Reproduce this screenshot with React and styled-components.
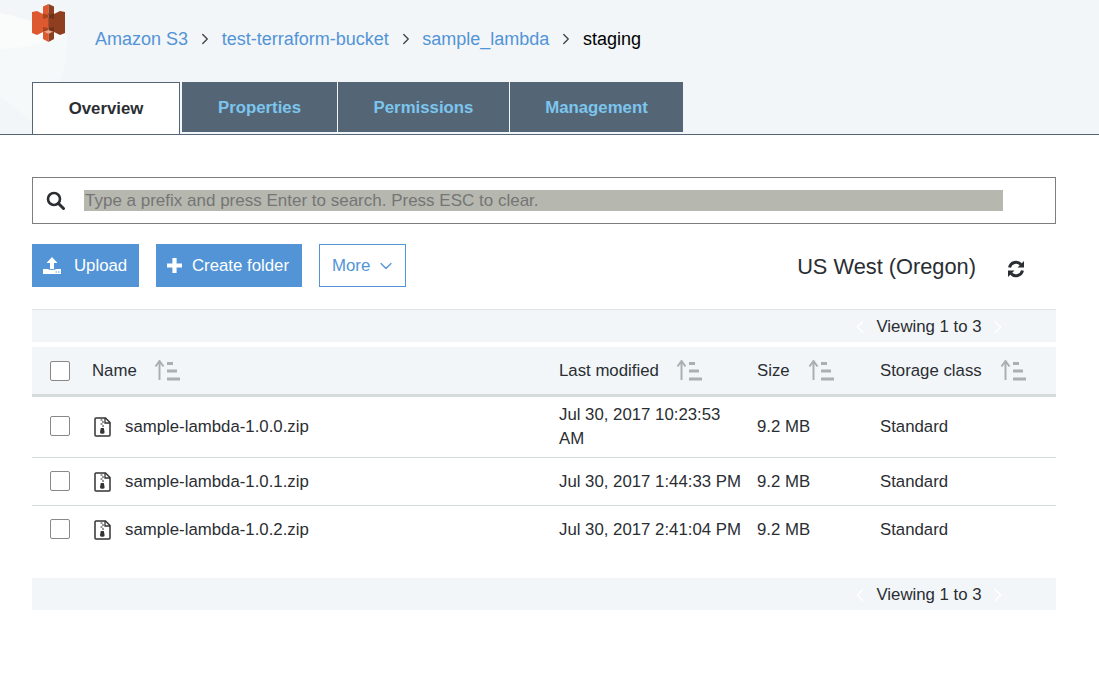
import React from "react";
import styled, { createGlobalStyle } from "styled-components";
import { ChevronRight, ChevronLeft, ChevronDown } from "lucide-react";

const GlobalStyle = createGlobalStyle`
  html, body {
    margin: 0;
    padding: 0;
    background: #fff;
    font-family: "Liberation Sans", Arial, sans-serif;
    color: #2a2e33;
  }
  * { box-sizing: border-box; }
`;

const Page = styled.div`
  width: 1099px;
  height: 673px;
  overflow: hidden;
`;

const Header = styled.header`
  position: relative;
  height: 135px;
  padding: 0 32px;
  background: #f2f6f8;
  border-bottom: 1px solid #546675;
  overflow: hidden;
`;

const Swoosh = styled.svg`
  position: absolute;
  left: 0;
  top: 0;
`;

const Crumbs = styled.div`
  position: relative;
  display: flex;
  align-items: flex-start;
  height: 82px;
`;

const LogoMark = styled.svg`
  flex-shrink: 0;
  margin-top: 4px;
  margin-right: 30px;
`;

const CrumbList = styled.nav`
  display: flex;
  align-items: center;
  margin-top: 27px;
  height: 24px;
  font-size: 18px;
`;

const Crumb = styled.span`
  color: ${(p) => (p.$current ? "#000" : "#5294d6")};
`;

const CrumbSep = styled.span`
  display: flex;
  justify-content: center;
  width: 33.6px;
  color: #444;
`;

const Tabs = styled.div`
  position: relative;
  display: flex;
  align-items: flex-start;
`;

const ActiveTab = styled.div`
  display: flex;
  align-items: center;
  justify-content: center;
  width: 148px;
  height: 52px;
  margin-right: 2px;
  background: #fff;
  border: 1px solid #546675;
  border-bottom: none;
  font-size: 16.8px;
  font-weight: 700;
  color: #2a2e33;
`;

const Tab = styled.div`
  display: flex;
  align-items: center;
  justify-content: center;
  width: ${(p) => p.$w}px;
  height: 50px;
  margin-right: 1px;
  padding-top: 2px;
  background: #546675;
  font-size: 16.8px;
  font-weight: 700;
  color: #7cc5ee;
`;

const Content = styled.main`
  padding: 42px 43px 0 32px;
`;

const SearchBox = styled.div`
  display: flex;
  align-items: center;
  height: 47px;
  padding: 0 52px 0 13px;
  border: 1px solid #7d7d7d;
`;

const SearchText = styled.span`
  flex: 1;
  height: 21px;
  margin-left: 19px;
  padding-left: 1px;
  background: #b6b8b0;
  font-size: 17px;
  line-height: 21px;
  color: #757575;
`;

const Toolbar = styled.div`
  display: flex;
  align-items: center;
  height: 43px;
  margin-top: 20px;
`;

const SolidButton = styled.div`
  display: flex;
  align-items: center;
  width: ${(p) => p.$w}px;
  height: 43px;
  margin-right: 17px;
  padding-left: ${(p) => p.$pad}px;
  gap: ${(p) => p.$gap}px;
  background: #5294d6;
  color: #fff;
  font-size: 16.8px;
`;

const OutlineButton = styled.div`
  display: flex;
  align-items: center;
  width: 87px;
  height: 43px;
  padding-left: 12px;
  gap: 6px;
  border: 1px solid #5294d6;
  color: #5294d6;
  font-size: 16.8px;
`;

const Region = styled.div`
  margin-left: auto;
  margin-top: 2px;
  margin-right: 31px;
  font-size: 21.8px;
  color: #2a2e33;
`;

const RefreshWrap = styled.div`
  display: flex;
  margin-top: 7px;
  margin-right: 31px;
`;

const Pager = styled.div`
  display: flex;
  align-items: center;
  justify-content: center;
  height: ${(p) => p.$h}px;
  margin-top: ${(p) => p.$top}px;
  padding-left: 770px;
  padding-top: 2px;
  background: #f2f6f8;
  border-top: ${(p) => (p.$line ? "1px solid #e1e4e5" : "none")};
  font-size: 16.8px;
  gap: 5px;
  color: #2a2e33;
  white-space: nowrap;
`;

const TableGrid = styled.div`
  display: grid;
  grid-template-columns: 60px 467px 198px 123px 176px;
  align-items: center;
  font-size: 16.8px;
`;

const HeadRow = styled(TableGrid)`
  height: 50px;
  margin-top: 5px;
  background: #f2f6f8;
  border-bottom: 3px solid #d5dbdb;
`;

const Row = styled(TableGrid)`
  height: ${(p) => p.$h}px;
  padding-bottom: ${(p) => p.$pb}px;
  border-bottom: ${(p) => (p.$last ? "none" : "1px solid #d5dbdb")};
`;

const CheckCell = styled.div`
  display: flex;
  padding-left: 18px;
`;

const Checkbox = styled.span`
  display: block;
  width: 20px;
  height: 20px;
  background: #fff;
  border: 1px solid #888;
  border-radius: 2px;
`;

const HeadCell = styled.div`
  display: flex;
  align-items: center;
  gap: ${(p) => p.$gap}px;
`;

const NameCell = styled.div`
  display: flex;
  align-items: center;
  gap: 13px;
  padding-top: 2px;
  padding-left: 2px;
`;

const Cell = styled.div`
  line-height: 24px;
  padding-top: 2px;
  padding-right: 10px;
`;

const SortIcon = () => (
  <svg width="26" height="22" viewBox="0 0 26 22">
    <path d="M5.500 20V2M1.500 6.500 5.500 1l4 5.500" fill="none" stroke="#aab0b2" strokeWidth="2" />
    <path d="M13 3.500h6M13 11h10M13 19h13" fill="none" stroke="#aab0b2" strokeWidth="3" />
  </svg>
);

const ZipIcon = () => (
  <svg width="18" height="20" viewBox="0 0 18 20">
    <path d="M2 1h9.500L16 5.500V18a1 1 0 0 1-1 1H2a1 1 0 0 1-1-1V2a1 1 0 0 1 1-1z" fill="#fff" stroke="#333" strokeWidth="1.500" />
    <path d="M11 1v5h5" fill="none" stroke="#333" strokeWidth="1.300" />
    <path d="M6.500 3h2M8 5h2M6.500 7h2M8 9h2" stroke="#333" strokeWidth="1.200" />
    <path d="M6.800 11h3l.8 4a1.500 1.500 0 0 1-1.500 1.700H7.500A1.500 1.500 0 0 1 6 15z" fill="#333" />
  </svg>
);

const files = [
  { name: "sample-lambda-1.0.0.zip", date: "Jul 30, 2017 10:23:53 AM", h: 61, pb: 2 },
  { name: "sample-lambda-1.0.1.zip", date: "Jul 30, 2017 1:44:33 PM", h: 48, pb: 1 },
  { name: "sample-lambda-1.0.2.zip", date: "Jul 30, 2017 2:41:04 PM", h: 47, pb: 1, last: true },
];

const PagerContent = () => (
  <>
    <ChevronLeft size={22} color="#fff" strokeWidth={1.500} />
    <span>Viewing 1 to 3</span>
    <ChevronRight size={22} color="#fff" strokeWidth={1.500} />
  </>
);

export default function App() {
  return (
    <Page>
      <GlobalStyle />
      <Header>
        <Swoosh width="70" height="134" viewBox="0 0 70 134">
          <path d="M0 13C25 18 48 27 67 36c1 15-1 30-7 46H32v40L0 96z" fill="#f6f9fa" />
          <path d="M0 13C25 18 48 27 67 36 45 44 22 48 0 49z" fill="#fafcfc" />
        </Swoosh>
        <Crumbs>
          <LogoMark width="33" height="38" viewBox="0 0 33 38">
            <path d="M0 8l5-1 6 3v18l-6 3-5-2z" fill="#dd5a31" />
            <path d="M33 8l-5-1-6 3v18l6 3 5-2z" fill="#8f3f1f" />
            <path d="M11 9h5.500v20H11z" fill="#a8451f" />
            <path d="M16.500 9H22v20h-5.500z" fill="#70301a" />
            <path d="M11 2.500 16.500 0v11L11 9.500z" fill="#dd5a31" />
            <path d="M22 2.500 16.500 0v11L22 9.500z" fill="#8f3f1f" />
            <path d="M11 15l5.500-1.500V24L11 23z" fill="#dd5a31" />
            <path d="M22 15l-5.500-1.500V24l5.500-1z" fill="#8f3f1f" />
            <path d="M11 28l5.500-2 5.500 2-5.500 1.500z" fill="#eea58d" />
            <path d="M11 28l5.500 1.500V38L11 35z" fill="#dd5a31" />
            <path d="M22 28l-5.500 1.500V38l5.500-3z" fill="#8f3f1f" />
          </LogoMark>
          <CrumbList>
            <Crumb>Amazon S3</Crumb>
            <CrumbSep><ChevronRight size={18} strokeWidth={1.800} /></CrumbSep>
            <Crumb>test-terraform-bucket</Crumb>
            <CrumbSep><ChevronRight size={18} strokeWidth={1.800} /></CrumbSep>
            <Crumb>sample_lambda</Crumb>
            <CrumbSep><ChevronRight size={18} strokeWidth={1.800} /></CrumbSep>
            <Crumb $current>staging</Crumb>
          </CrumbList>
        </Crumbs>
        <Tabs>
          <ActiveTab>Overview</ActiveTab>
          <Tab $w={155}>Properties</Tab>
          <Tab $w={171}>Permissions</Tab>
          <Tab $w={173}>Management</Tab>
        </Tabs>
      </Header>
      <Content>
        <SearchBox>
          <svg width="19" height="19" viewBox="0 0 19 19">
            <circle cx="8" cy="8" r="6" fill="none" stroke="#2a2e33" strokeWidth="2.600" />
            <path d="M12.500 12.500 17.500 17.500" stroke="#2a2e33" strokeWidth="3" strokeLinecap="round" />
          </svg>
          <SearchText>Type a prefix and press Enter to search. Press ESC to clear.</SearchText>
        </SearchBox>
        <Toolbar>
          <SolidButton $w={107} $pad={11} $gap={13}>
            <svg width="18" height="17" viewBox="0 0 18 17">
              <path d="M9 0l5.500 6H11v6H7V6H3.500z" fill="#fff" />
              <path d="M0 12h5c1 1.200 7 1.200 8 0h5v5H0z" fill="#fff" />
              <path d="M12.500 15H14M15 15h1.500" stroke="#5294d6" strokeWidth="1" />
            </svg>
            Upload
          </SolidButton>
          <SolidButton $w={146} $pad={11} $gap={10}>
            <svg width="15" height="15" viewBox="0 0 15 15">
              <path d="M7.500 0v15M0 7.500h15" stroke="#fff" strokeWidth="4.200" />
            </svg>
            Create folder
          </SolidButton>
          <OutlineButton>
            More
            <ChevronDown size={20} strokeWidth={1.500} />
          </OutlineButton>
          <Region>US West (Oregon)</Region>
          <RefreshWrap>
            <svg width="18" height="18" viewBox="0 0 18 18">
              <path d="M2.500 7.500A6.700 6.700 0 0 1 14 4.500" fill="none" stroke="#2a2e33" strokeWidth="3" />
              <path d="M17 1v6.500h-6.500z" fill="#2a2e33" />
              <path d="M15.500 10.500A6.700 6.700 0 0 1 4 13.500" fill="none" stroke="#2a2e33" strokeWidth="3" />
              <path d="M1 17v-6.500h6.500z" fill="#2a2e33" />
            </svg>
          </RefreshWrap>
        </Toolbar>
        <Pager $top={22} $h={33} $line><PagerContent /></Pager>
        <HeadRow>
          <CheckCell><Checkbox /></CheckCell>
          <HeadCell $gap={17}>Name <SortIcon /></HeadCell>
          <HeadCell $gap={17}>Last modified <SortIcon /></HeadCell>
          <HeadCell $gap={18}>Size <SortIcon /></HeadCell>
          <HeadCell $gap={18}>Storage class <SortIcon /></HeadCell>
        </HeadRow>
        {files.map((f) => (
          <Row key={f.name} $h={f.h} $pb={f.pb} $last={f.last}>
            <CheckCell><Checkbox /></CheckCell>
            <NameCell><ZipIcon />{f.name}</NameCell>
            <Cell>{f.date}</Cell>
            <Cell>9.2 MB</Cell>
            <Cell>Standard</Cell>
          </Row>
        ))}
        <Pager $top={25} $h={32}><PagerContent /></Pager>
      </Content>
    </Page>
  );
}
